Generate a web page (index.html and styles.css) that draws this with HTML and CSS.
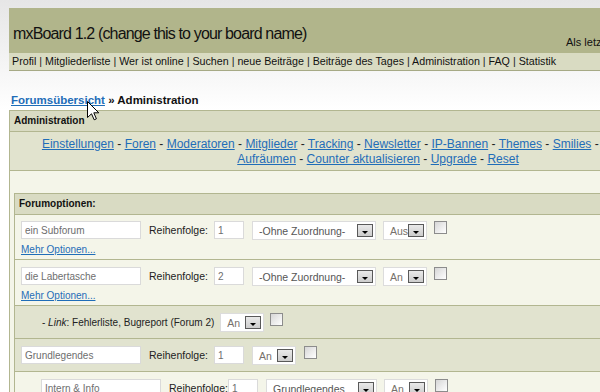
FILE: index.html
```html
<!DOCTYPE html>
<html lang="de">
<head>
    <meta charset="UTF-8">
    <meta name="viewport" content="width=device-width, initial-scale=1.0">
    <title>mxBoard 1.2 - Administration</title>
    <link rel="stylesheet" href="styles.css">
</head>
<body>
    <div class="page">
        <div class="header">
            <div class="board-title">mxBoard 1.2 (change this to your board name)</div>
            <div class="last-visit">Als letzter Besuch: 14.03.2007 um 18:42 Uhr</div>
        </div>
        <div class="nav">
            <a href="#">Profil</a> | <a href="#">Mitgliederliste</a> | <a href="#">Wer ist online</a> | <a href="#">Suchen</a> | <a href="#">neue Beiträge</a> | <a href="#">Beiträge des Tages</a> | <a href="#">Administration</a> | <a href="#">FAQ</a> | <a href="#">Statistik</a>
        </div>

        <div class="crumbs">
            <a href="#">Forumsübersicht</a> » Administration
        </div>

        <div class="box admin-box">
            <div class="box-head">Administration</div>
            <div class="admin-links">
                <a href="#">Einstellungen</a> - <a href="#">Foren</a> - <a href="#">Moderatoren</a> - <a href="#">Mitglieder</a> - <a href="#">Tracking</a> - <a href="#">Newsletter</a> - <a href="#">IP-Bannen</a> - <a href="#">Themes</a> - <a href="#">Smilies</a> - <a href="#">Zensur</a> - <a href="#">Ranglisten</a> -<br>
                <a href="#">Aufräumen</a> - <a href="#">Counter aktualisieren</a> - <a href="#">Upgrade</a> - <a href="#">Reset</a>
            </div>
            <div class="admin-body">
                <div class="box forum-box">
                    <div class="box-head">Forumoptionen:</div>

                    <div class="forum-row">
                        <div class="controls">
                            <input class="text-input name-input" type="text" value="ein Subforum">
                            <span class="order-label">Reihenfolge:</span>
                            <input class="text-input order-input" type="text" value="1">
                            <div class="select parent-select"><span class="select-text">-Ohne Zuordnung-</span><span class="select-btn"></span></div>
                            <div class="select state-select"><span class="select-text">Aus</span><span class="select-btn"></span></div>
                            <span class="checkbox"></span>
                        </div>
                        <a class="more-link" href="#">Mehr Optionen...</a>
                    </div>

                    <div class="forum-row">
                        <div class="controls">
                            <input class="text-input name-input" type="text" value="die Labertasche">
                            <span class="order-label">Reihenfolge:</span>
                            <input class="text-input order-input" type="text" value="2">
                            <div class="select parent-select"><span class="select-text">-Ohne Zuordnung-</span><span class="select-btn"></span></div>
                            <div class="select state-select"><span class="select-text">An</span><span class="select-btn"></span></div>
                            <span class="checkbox"></span>
                        </div>
                        <a class="more-link" href="#">Mehr Optionen...</a>
                    </div>

                    <div class="forum-row link-row">
                        <div class="controls">
                            <span class="link-text">- <i>Link</i>: Fehlerliste, Bugreport (Forum 2)</span>
                            <div class="select state-select"><span class="select-text">An</span><span class="select-btn"></span></div>
                            <span class="checkbox"></span>
                        </div>
                    </div>

                    <div class="forum-row category-row">
                        <div class="controls">
                            <input class="text-input name-input" type="text" value="Grundlegendes">
                            <span class="order-label">Reihenfolge:</span>
                            <input class="text-input order-input" type="text" value="1">
                            <div class="select state-select"><span class="select-text">An</span><span class="select-btn"></span></div>
                            <span class="checkbox"></span>
                        </div>
                    </div>

                    <div class="forum-row child-row">
                        <div class="controls">
                            <input class="text-input name-input" type="text" value="Intern &amp; Info">
                            <span class="order-label">Reihenfolge:</span>
                            <input class="text-input order-input" type="text" value="1">
                            <div class="select parent-select"><span class="select-text">Grundlegendes</span><span class="select-btn"></span></div>
                            <div class="select state-select"><span class="select-text">An</span><span class="select-btn"></span></div>
                            <span class="checkbox"></span>
                        </div>
                        <a class="more-link" href="#">Mehr Optionen...</a>
                    </div>
                </div>
            </div>
        </div>
    </div>

    <svg class="cursor" width="13" height="20" viewBox="0 0 13 20">
        <path d="M0.5 0.5 L0.5 16.5 L4.5 12.8 L7.2 18.8 L9.4 17.8 L6.8 11.8 L11.8 11.8 Z" fill="#ffffff" stroke="#000000" stroke-width="1"/>
    </svg>
</body>
</html>
```

FILE: styles.css
```css
html,
body {
    overflow: hidden;
}

body {
    margin: 0;
    min-height: 392px;
    font-family: "Liberation Sans", Arial, sans-serif;
    color: #000000;
    background: linear-gradient(#e6e6e6, #ffffff 110px) no-repeat;
    background-color: #ffffff;
}

.page {
    width: 760px;
    padding: 8px 0 0 9px;
}

.header {
    display: flex;
    align-items: flex-end;
    height: 45px;
    box-sizing: border-box;
    padding: 0 0 4px 4px;
    background: #b1b58b;
    white-space: nowrap;
}

.board-title {
    flex-shrink: 0;
    width: 553px;
    margin-bottom: 6px;
    font-size: 16px;
    line-height: 18px;
    letter-spacing: -0.85px;
    color: #111111;
}

.last-visit {
    flex-shrink: 0;
    font-size: 11px;
    line-height: 13px;
    color: #111111;
}

.nav {
    height: 17px;
    padding-left: 3px;
    background: #d9dbc2;
    border-bottom: 1px solid #a6a985;
    font-size: 10.7px;
    line-height: 17px;
    color: #222222;
    white-space: nowrap;
}

.nav a {
    color: #111111;
    text-decoration: none;
}

.crumbs {
    margin: 22px 0 3px 2px;
    font-size: 11.5px;
    font-weight: bold;
    line-height: 14px;
    color: #111111;
}

.crumbs a {
    color: #1f6db8;
}

.box {
    border: 1px solid #b2b690;
}

.admin-box {
    width: 736px;
}

.box-head {
    height: 20px;
    padding-left: 4px;
    background: #d9dbc3;
    border-bottom: 1px solid #b2b690;
    font-size: 10px;
    font-weight: bold;
    line-height: 20px;
    color: #111111;
}

.admin-links {
    padding: 5px 0 3px;
    background: #e1e3ce;
    border-bottom: 1px solid #b2b690;
    text-align: center;
    font-size: 12px;
    line-height: 15px;
    color: #222222;
    white-space: nowrap;
}

.admin-links a {
    color: #1f6db8;
}

.admin-body {
    padding: 22px 4px 0 4px;
    background: #f4f5e9;
}

.forum-box .box-head {
    padding-left: 4px;
}

.forum-row {
    padding: 6px 0 3px 6px;
    background: #f4f5e9;
    border-bottom: 1px solid #b2b690;
}

.forum-row + .forum-row {
    padding-top: 7px;
}

.controls {
    display: flex;
    align-items: flex-start;
    height: 19px;
}

.text-input {
    height: 18px;
    box-sizing: border-box;
    margin: 0;
    padding: 0 3px;
    border: 1px solid #dadada;
    background: #ffffff;
    font-family: inherit;
    font-size: 10px;
    color: #6e6e6e;
    outline: none;
}

.name-input {
    width: 120px;
}

.order-label {
    margin-left: 8px;
    font-size: 10.5px;
    line-height: 18px;
    color: #222222;
}

.order-input {
    width: 30px;
    margin-left: 6px;
}

.select {
    display: flex;
    align-items: center;
    justify-content: space-between;
    height: 19px;
    box-sizing: border-box;
    margin-left: 8px;
    padding: 0 2px 0 6px;
    border: 1px solid #dcdcdc;
    background: #ffffff;
}

.select-text {
    font-size: 10.5px;
    color: #555555;
    white-space: nowrap;
}

.state-select .select-text {
    color: #76706a;
}

.select-btn {
    position: relative;
    width: 16px;
    height: 13px;
    box-sizing: border-box;
    border: 1px solid #595959;
    background: linear-gradient(#e9e9e9, #cdcdcd);
}

.select-btn::after {
    content: "";
    position: absolute;
    left: 4px;
    top: 6px;
    border-left: 3px solid transparent;
    border-right: 3px solid transparent;
    border-top: 3px solid #000000;
}

.parent-select {
    width: 124px;
}

.state-select {
    width: 44px;
    margin-left: 7px;
}

.checkbox {
    width: 13px;
    height: 13px;
    box-sizing: border-box;
    margin-left: 7px;
    border: 1px solid #8c8c8c;
    background: linear-gradient(135deg, #d6d6d6, #ffffff);
}

.more-link {
    display: block;
    margin-top: 3px;
    font-size: 10px;
    line-height: 13px;
    color: #1f6db8;
}

.link-row,
.category-row {
    background: #e1e3cf;
}

.link-row {
    padding: 6px 0 6px 27px;
}

.link-text {
    font-size: 10px;
    line-height: 19px;
    color: #222222;
}

.link-row .state-select {
    margin-left: 6px;
}

.link-row .checkbox {
    margin-left: 6px;
}

.category-row {
    padding: 6px 0 6px 6px;
}

.category-row .state-select {
    margin-left: 8px;
}

.category-row .checkbox {
    margin-left: 8px;
}

.child-row {
    padding-left: 26px;
}

.child-row .order-input {
    margin-left: 0;
}

.child-row .parent-select {
    width: 111px;
}

.cursor {
    position: absolute;
    left: 87px;
    top: 101px;
}
```
